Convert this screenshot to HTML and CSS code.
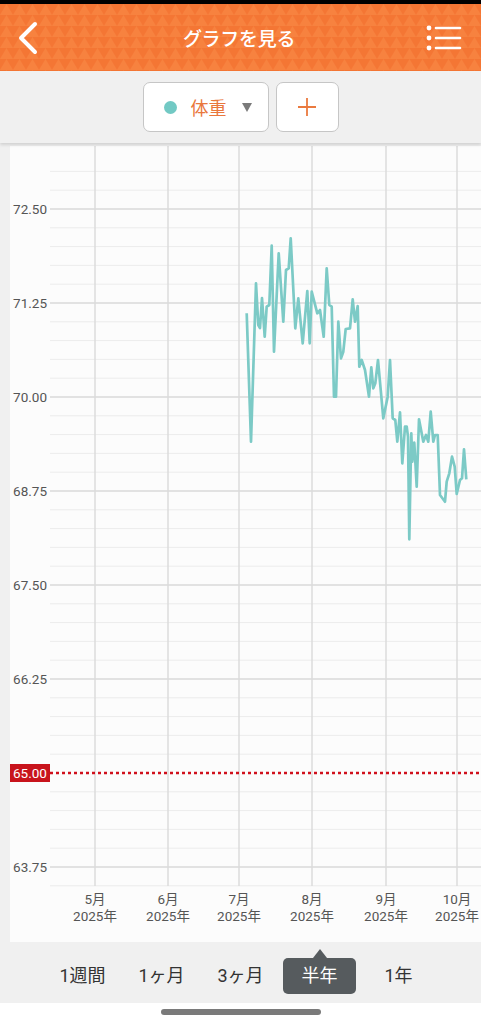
FILE: index.html
```html
<!DOCTYPE html>
<html lang="ja">
<head>
    <meta charset="UTF-8">
    <title>グラフを見る</title>
    <link rel="stylesheet" href="styles.css">
</head>
<body>
    <div class="status"></div>
    <!--ヘッダー-->
    <header class="header">
        <a class="back">
            <svg width="24" height="34" viewBox="0 0 24 34"><polyline points="19,3 5,17 19,31" fill="none" stroke="#fff" stroke-width="4" stroke-linecap="round" stroke-linejoin="round"/></svg>
        </a>
        <h1 class="title">グラフを見る</h1>
        <a class="menu">
            <svg width="36" height="28" viewBox="0 0 36 28">
                <circle cx="3" cy="4" r="2.4" fill="#fff"/>
                <circle cx="3" cy="14" r="2.4" fill="#fff"/>
                <circle cx="3" cy="24" r="2.4" fill="#fff"/>
                <path d="M10 4H34M10 14H34M10 24H34" stroke="#fff" stroke-width="2.6" stroke-linecap="round"/>
            </svg>
        </a>
    </header>
    <!--項目選択-->
    <div class="toolbar">
        <div class="select">
            <span class="dot"></span>
            <span class="select-name">体重</span>
            <span class="caret"></span>
        </div>
        <div class="add">
            <svg width="20" height="20" viewBox="0 0 20 20"><path d="M10 1V19M1 10H19" stroke="#ea7a3f" stroke-width="1.8"/></svg>
        </div>
    </div>
    <!--グラフ-->
    <div class="chart-area">
        <div class="chart">
            <svg class="plot" width="471" height="796" viewBox="10 146 471 796">
                <path class="grid-minor" d="M50 171.4H481M50 190.2H481M50 227.8H481M50 246.6H481M50 265.4H481M50 284.2H481M50 321.8H481M50 340.6H481M50 359.4H481M50 378.2H481M50 415.8H481M50 434.6H481M50 453.4H481M50 472.2H481M50 509.8H481M50 528.6H481M50 547.4H481M50 566.2H481M50 603.8H481M50 622.6H481M50 641.4H481M50 660.2H481M50 697.8H481M50 716.6H481M50 735.4H481M50 754.2H481M50 791.8H481M50 810.6H481M50 829.4H481M50 848.2H481M50 885.8H481"/>
                <path class="grid-major" d="M50 209H481M50 303H481M50 397H481M50 491H481M50 585H481M50 679H481M50 867H481"/>
                <path class="grid-month" d="M95 146V886M168 146V886M239 146V886M312 146V886M386 146V886M457 146V886"/>
                <line class="target" x1="50" y1="773" x2="481" y2="773"/>
                <polyline class="series" points="246.7,313.3 251,441.7 256,283.3 258.3,325 260,328 262,298 264.7,336.7 266.7,306.7 269.3,305 271.7,245.7 274,351.7 278.7,253.3 283.3,321.7 286,270 288.7,268.3 290.7,238.3 295.3,328.3 298.3,298.3 302.7,343.3 307.3,291 309.7,343.3 311.7,291.7 317.3,313.3 320,310 323.7,336.7 326.7,268.3 329.3,305 331.7,306.7 334,396.7 336,396.7 338.3,321.7 341,358.3 343.3,351.7 345.7,329 350,328.3 352.7,299.3 355,321.7 357.7,306 359.3,366.7 361.7,360 365,370 369,396.7 371.3,367.3 373.3,388.3 375.3,383.3 378,360 383.3,418.3 387.7,396.7 390,360 392.7,418.3 395.3,420 397.3,441.7 400,412.3 402.3,463.3 405,426.7 406.7,426.7 408,436.7 409.3,539.3 411.3,433.3 412.3,461.7 414.3,442.7 416.7,486.7 419,419.3 423.3,441.7 426,435 428.3,441.7 430.7,411.7 433.3,441.7 435,435 437.7,435 440,495 445,501.7 446.7,481.7 449.3,473.3 452,456.7 454.7,466.7 456.7,494 460,480 462,478.3 464,449.3 466.3,479.3"/>
                <!--縦軸-->
                <text class="y-label" x="47" y="214">72.50</text>
                <text class="y-label" x="47" y="308">71.25</text>
                <text class="y-label" x="47" y="402">70.00</text>
                <text class="y-label" x="47" y="496">68.75</text>
                <text class="y-label" x="47" y="590">67.50</text>
                <text class="y-label" x="47" y="684">66.25</text>
                <text class="y-label" x="47" y="872">63.75</text>
                <rect class="target-box" x="10" y="764" width="40" height="18"/>
                <text class="target-label" x="30" y="778">65.00</text>
                <!--横軸-->
                <text class="x-label" x="95" y="904">5月</text>
                <text class="x-label" x="95" y="921">2025年</text>
                <text class="x-label" x="168" y="904">6月</text>
                <text class="x-label" x="168" y="921">2025年</text>
                <text class="x-label" x="239" y="904">7月</text>
                <text class="x-label" x="239" y="921">2025年</text>
                <text class="x-label" x="312" y="904">8月</text>
                <text class="x-label" x="312" y="921">2025年</text>
                <text class="x-label" x="386" y="904">9月</text>
                <text class="x-label" x="386" y="921">2025年</text>
                <text class="x-label" x="457" y="904">10月</text>
                <text class="x-label" x="457" y="921">2025年</text>
            </svg>
        </div>
    </div>
    <!--期間-->
    <nav class="tabs">
        <span class="tab">1週間</span>
        <span class="tab">1ヶ月</span>
        <span class="tab">3ヶ月</span>
        <span class="tab active">半年</span>
        <span class="tab">1年</span>
    </nav>
    <div class="home"><span class="home-bar"></span></div>
</body>
</html>
```

FILE: styles.css
```css
*{
    padding: 0;
    margin: 0;
    box-sizing: border-box;
}
body{
    width: 481px;
    height: 1024px;
    overflow: hidden;
    background-color: #f0f0f0;
    font-family: Roboto, "Noto Sans CJK JP", sans-serif;
    color: #333;
}
.status{
    height: 4px;
    background-color: #000;
}
.header{
    display: grid;
    grid-template-columns: 1fr auto 1fr;
    align-items: center;
    height: 67px;
    padding: 0 19px 0 16px;
    background-color: #f47634;
    background-image: url("data:image/svg+xml,%3Csvg xmlns='http://www.w3.org/2000/svg' width='13' height='11'%3E%3Cpath d='M0 11L6.5 0L13 11Z' fill='%23f7823f'/%3E%3C/svg%3E");
}
.header .back{
    display: flex;
    justify-self: start;
}
.header .title{
    font-size: 19px;
    font-weight: 500;
    color: #fff;
    letter-spacing: -0.3px;
}
.header .menu{
    display: flex;
    justify-self: end;
}
.toolbar{
    position: relative;
    z-index: 1;
    display: flex;
    justify-content: center;
    align-items: center;
    gap: 7px;
    height: 72px;
    background-color: #f0f0f0;
    box-shadow: 0 2px 3px rgba(0,0,0,0.13);
}
.select, .add{
    display: flex;
    align-items: center;
    height: 50px;
    background-color: #fff;
    border: 1.5px solid #c6c6c6;
    border-radius: 7px;
}
.select{
    width: 126px;
    padding-left: 20px;
}
.select .dot{
    width: 13px;
    height: 13px;
    border-radius: 50%;
    background-color: #72c9c4;
}
.select .select-name{
    margin-left: 14px;
    font-size: 18px;
    color: #e9773c;
}
.select .caret{
    margin-left: 15px;
    border-left: 5.5px solid transparent;
    border-right: 5.5px solid transparent;
    border-top: 9px solid #7a7a7a;
}
.add{
    justify-content: center;
    width: 63px;
}
.chart-area{
    padding: 3px 0 0 10px;
}
.chart{
    height: 796px;
    background-color: #fcfcfc;
}
.plot{
    display: block;
}
.grid-minor{
    stroke: #ececec;
    stroke-width: 1;
}
.grid-major{
    stroke: #d9d9d9;
    stroke-width: 1.3;
}
.grid-month{
    stroke: #dcdcdc;
    stroke-width: 1.5;
}
.target{
    stroke: #d0101c;
    stroke-width: 2.5;
    stroke-dasharray: 3 3;
}
.series{
    fill: none;
    stroke: #7ccac6;
    stroke-width: 2.7;
    stroke-linejoin: round;
}
.y-label{
    font-size: 13.5px;
    fill: #555;
    text-anchor: end;
}
.target-box{
    fill: #c8141c;
}
.target-label{
    font-size: 13.5px;
    fill: #fff;
    text-anchor: middle;
}
.x-label{
    font-size: 13.5px;
    fill: #555;
    text-anchor: middle;
}
.tabs{
    display: flex;
    gap: 6px;
    height: 61px;
    padding: 16px 0 0 46px;
}
.tab{
    width: 73px;
    height: 36px;
    line-height: 36px;
    text-align: center;
    font-size: 18px;
    color: #333;
}
.tab.active{
    position: relative;
    background-color: #565b5e;
    border-radius: 5px;
    color: #fff;
}
.tab.active::before{
    content: "";
    position: absolute;
    top: -9px;
    left: 50%;
    margin-left: -7px;
    border-left: 7px solid transparent;
    border-right: 7px solid transparent;
    border-bottom: 9px solid #565b5e;
}
.home{
    display: flex;
    justify-content: center;
    height: 21px;
    padding-top: 6px;
    background-color: #fff;
}
.home-bar{
    width: 160px;
    height: 6px;
    border-radius: 3px;
    background-color: #7a7a7a;
}
```
